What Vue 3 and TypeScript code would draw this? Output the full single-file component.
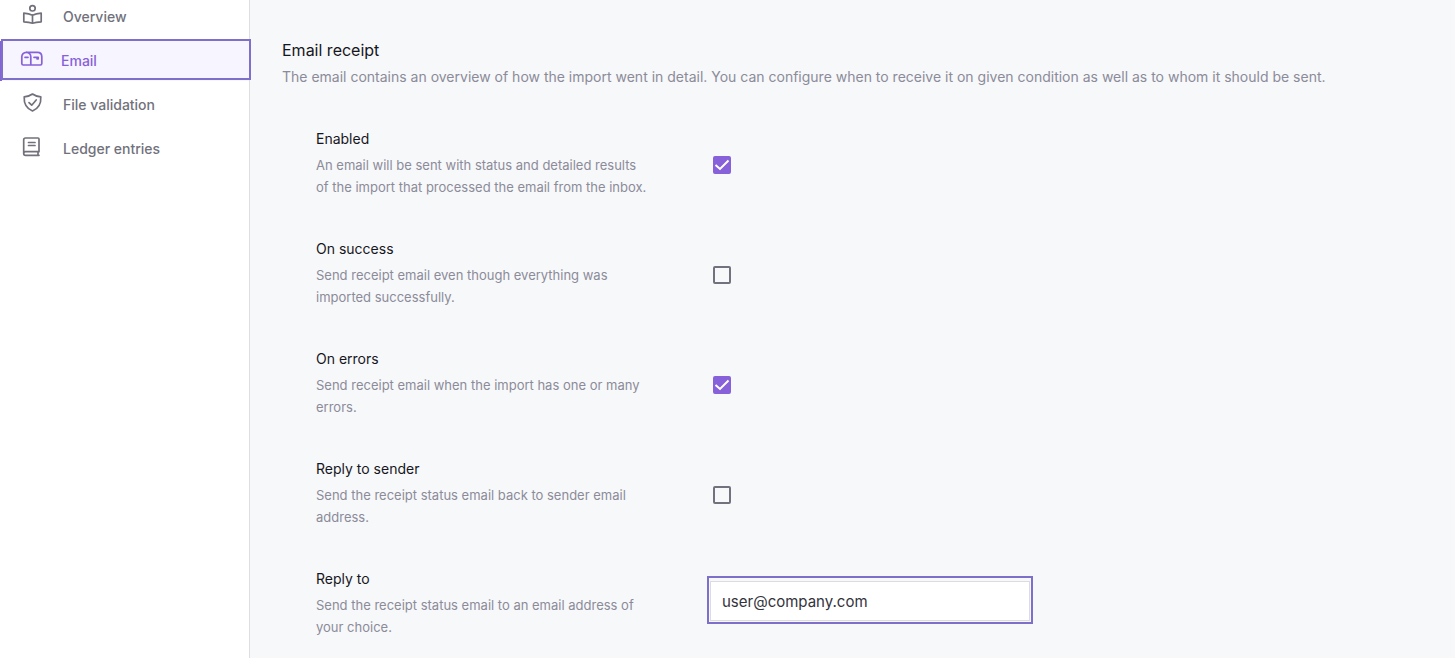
<script setup lang="ts">
import { reactive, ref } from 'vue'

interface NavItem {
  id: string
  label: string
}

interface ToggleSetting {
  id: string
  title: string
  text: string
  checked: boolean
}

const items: NavItem[] = [
  { id: 'overview', label: 'Overview' },
  { id: 'email', label: 'Email' },
  { id: 'validation', label: 'File validation' },
  { id: 'ledger', label: 'Ledger entries' },
]
const active = ref('email')

const settings = reactive<ToggleSetting[]>([
  {
    id: 'enabled',
    title: 'Enabled',
    text: 'An email will be sent with status and detailed results of the import that processed the email from the inbox.',
    checked: true,
  },
  {
    id: 'on-success',
    title: 'On success',
    text: 'Send receipt email even though everything was imported successfully.',
    checked: false,
  },
  {
    id: 'on-errors',
    title: 'On errors',
    text: 'Send receipt email when the import has one or many errors.',
    checked: true,
  },
  {
    id: 'reply-sender',
    title: 'Reply to sender',
    text: 'Send the receipt status email back to sender email address.',
    checked: false,
  },
])
const replyTo = ref('user@company.com')
</script>

<template>
  <div class="page">
    <aside class="sidebar">
      <nav class="nav">
        <a
          v-for="item in items"
          :key="item.id"
          :href="'#' + item.id"
          class="nav-item"
          :class="{ active: item.id === active }"
          @click.prevent="active = item.id"
        >
          <svg v-if="item.id === 'overview'" class="icon" viewBox="0 0 24 24" aria-hidden="true">
            <circle cx="12.5" cy="5.3" r="2.7" />
            <path d="M12.500 12.200C10 11 7 10.400 3.800 10.200V18.800C7 19 10 19.400 12.500 20.200C15 19.400 18 19 21.200 18.800V10.200C18 10.400 15 11 12.500 12.200ZM12.500 12.200V20.200" />
          </svg>
          <svg v-else-if="item.id === 'email'" class="icon" viewBox="0 0 24 24" aria-hidden="true">
            <path d="M6.500 5.300H17.500C20.300 5.300 21.800 7.200 21.800 9.800V16.500C21.800 17.500 21.300 18 20.300 18H3.300C2.300 18 1.800 17.500 1.800 16.500V9.800C1.800 7.200 3.700 5.300 6.300 5.300C9 5.300 10.800 7.200 10.800 9.800V18M5 10.300H8M14 10.300H18.200V11.800H17" />
          </svg>
          <svg v-else-if="item.id === 'validation'" class="icon" viewBox="0 0 24 24" aria-hidden="true">
            <path d="M12.500 3C14.800 4.700 17.600 5.600 20.800 5.900C21.200 12.500 18.800 17.400 12.500 20C6.200 17.400 3.800 12.500 4.200 5.900C7.400 5.600 10.200 4.700 12.500 3Z" />
            <path d="M9 11.700L11.700 14.200L16.200 9" />
          </svg>
          <svg v-else class="icon" viewBox="0 0 24 24" aria-hidden="true">
            <path d="M19 16.700V4C19 3.300 18.600 3 18 3H5.500C4.300 3 3.700 3.700 3.700 4.800V18.500M19 16.700H5.500C4.300 16.700 3.700 17.400 3.700 18.500C3.700 19.700 4.300 20.300 5.500 20.300H19M18 16.700V20.300M8.500 7.500H15M8.500 10.500H15" />
          </svg>
          <span>{{ item.label }}</span>
        </a>
      </nav>
    </aside>

    <main class="content">
      <h1 class="heading">Email receipt</h1>
      <p class="lead">
        The email contains an overview of how the import went in detail. You can configure when to
        receive it on given condition as well as to whom it should be sent.
      </p>

      <form class="settings" @submit.prevent>
        <div v-for="s in settings" :key="s.id" class="row">
          <div class="info">
            <label class="title" :for="s.id">{{ s.title }}</label>
            <p class="text" :id="s.id + '-text'">{{ s.text }}</p>
          </div>
          <span class="check">
            <input :id="s.id" v-model="s.checked" type="checkbox" :aria-describedby="s.id + '-text'" />
            <svg v-if="s.checked" class="tick" viewBox="0 0 18 18" aria-hidden="true">
              <path d="M2.500 9L7 13L15.500 4.500" />
            </svg>
          </span>
        </div>
        <div class="row">
          <div class="info">
            <label class="title" for="reply-to">Reply to</label>
            <p id="reply-to-text" class="text">
              Send the receipt status email to an email address of your choice.
            </p>
          </div>
          <div class="field">
            <input id="reply-to" v-model="replyTo" type="email" aria-describedby="reply-to-text" />
          </div>
        </div>
      </form>
    </main>
  </div>
</template>

<style>
body {
  margin: 0;
  background: #f7f8fa;
}
</style>

<style scoped>
.page {
  display: flex;
  min-height: 100vh;
  background: #f7f8fa;
  font-family: Inter, "Liberation Sans", sans-serif;
  color: #16161d;
}
.sidebar {
  flex: 0 0 249px;
  background: #fff;
  border-right: 1px solid #dedee2;
}
.nav {
  display: flex;
  flex-direction: column;
  gap: 4px;
  margin-top: -3px;
}
.nav-item {
  position: relative;
  display: flex;
  align-items: center;
  gap: 19px;
  height: 40px;
  padding-left: 20px;
  color: #71717c;
  font-size: 14px;
  font-weight: 500;
  text-decoration: none;
}
.nav-item span {
  padding-bottom: 2px;
}
.nav-item.active {
  gap: 17px;
  padding-left: 18px;
  border-left: 2px solid #8661d9;
  background: #f7f5ff;
  color: #8661d9;
}
.nav-item.active::after {
  content: "";
  position: absolute;
  inset: -2px -2px 1px -1px;
  border: 2px solid #7e6fcb;
}
.icon {
  width: 24px;
  height: 24px;
  margin-bottom: 4px;
  fill: none;
  stroke: currentColor;
  stroke-width: 1.7;
  stroke-linecap: round;
  stroke-linejoin: round;
}
.content {
  flex: 1;
  min-width: 0;
  padding: 38px 32px 0;
}
.heading {
  margin: 0;
  font-size: 16px;
  font-weight: 400;
  line-height: 24px;
}
.lead {
  margin: 4px 0 0;
  font-size: 14px;
  line-height: 22px;
  color: #8b8b99;
}
.settings {
  display: flex;
  flex-direction: column;
  gap: 40px;
  margin: 40px 0 0;
  padding-left: 34px;
}
.row {
  display: flex;
  align-items: flex-start;
  gap: 57px;
}
.info {
  flex: 0 1 334px;
}
.title {
  display: block;
  font-size: 14px;
  line-height: 22px;
}
.text {
  margin: 4px 0 0;
  font-size: 13px;
  line-height: 22px;
  color: #8b8b99;
}
.check {
  position: relative;
  display: flex;
  margin: 28px 6px 0;
}
.check input {
  appearance: none;
  box-sizing: border-box;
  width: 18px;
  height: 18px;
  margin: 0;
  border: 2px solid #72717d;
  border-radius: 2px;
}
.check input:checked {
  border-color: #8661d9;
  background: #8661d9;
}
.tick {
  position: absolute;
  inset: 0;
  fill: none;
  stroke: #fff;
  stroke-width: 2;
  pointer-events: none;
}
.field {
  box-sizing: border-box;
  flex: 0 1 326px;
  margin-top: 8px;
  padding: 3px 1px 1px;
  border: 2px solid #7e6fcb;
}
.field input {
  display: block;
  box-sizing: border-box;
  width: 100%;
  height: 40px;
  padding: 0 11px;
  border: 1px solid #dcdce0;
  background: #fff;
  outline: none;
  font: 400 15px Inter, "Liberation Sans", sans-serif;
  color: #33333b;
}
</style>
